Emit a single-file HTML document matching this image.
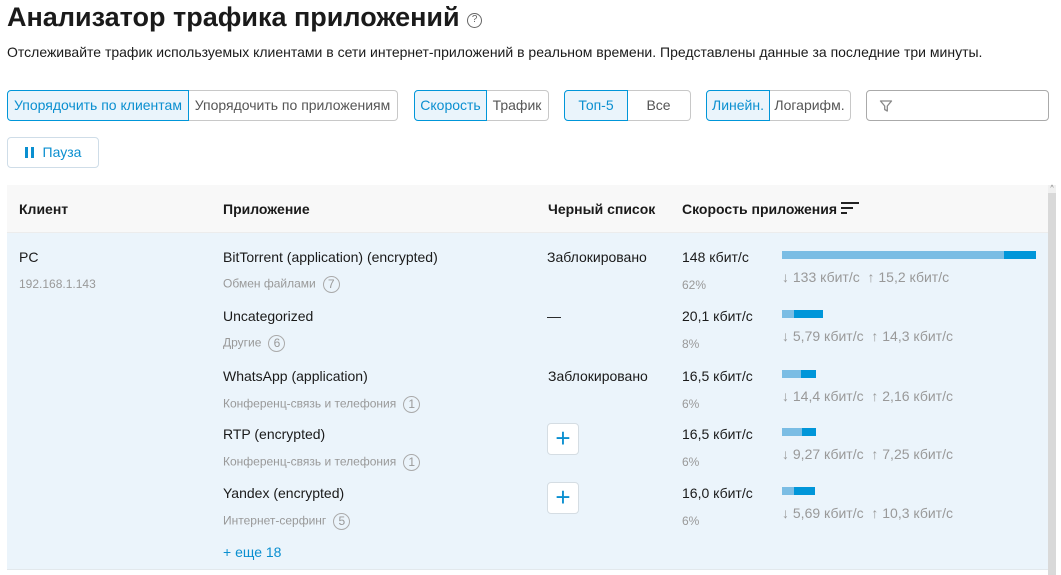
<!DOCTYPE html>
<html><head><meta charset="utf-8"><style>
*{margin:0;padding:0;box-sizing:border-box}
body{width:1061px;height:575px;overflow:hidden;background:#fff;font-family:"Liberation Sans",Arial,sans-serif;color:#1a1a1a;position:relative}
.a{position:absolute;white-space:nowrap}
.t{font-size:14px;line-height:16px}
.s{font-size:12px;line-height:14px;color:#999}
.b{font-weight:bold}
.btn{position:absolute;height:31px;border:1px solid #c8c8c8;font-size:14px;line-height:29px;text-align:center;color:#555;background:#fff}
.on{border-color:#0096d9;background:#eaf4fb;color:#0a8fd0;z-index:2}
.l{border-radius:4px 0 0 4px}.r{border-radius:0 4px 4px 0;border-left:none}
.n{display:inline-block;width:17px;height:17px;border:1.3px solid #aaa;border-radius:50%;text-align:center;line-height:14px;font-size:12px;margin-left:7px;vertical-align:middle;color:#999}
.bar{position:absolute;height:8px}
.lt{background:#7bbde4}.dk{background:#0096d9}
.plus{position:absolute;left:547px;width:32px;height:32px;border:1px solid #d5dde3;border-radius:4px;background:#fff;color:#0a8fd0;font-size:26px;line-height:28px;text-align:center}
</style></head><body>
<div class="a b" style="left:7px;top:1px;font-size:27px;line-height:32px">Анализатор трафика приложений <span style="display:inline-block;width:15px;height:15px;border:1.5px solid #666;border-radius:50%;font-size:10px;line-height:12px;text-align:center;vertical-align:4px;font-weight:normal;color:#666">?</span></div>
<div class="a t" style="left:7px;top:44px">Отслеживайте трафик используемых клиентами в сети интернет-приложений в реальном времени. Представлены данные за последние три минуты.</div>

<div class="btn on l" style="left:7px;top:90px;width:182px">Упорядочить по клиентам</div>
<div class="btn r" style="left:188px;top:90px;width:210px">Упорядочить по приложениям</div>
<div class="btn on l" style="left:414px;top:90px;width:73px">Скорость</div>
<div class="btn r" style="left:486px;top:90px;width:63px">Трафик</div>
<div class="btn on l" style="left:564px;top:90px;width:64px">Топ-5</div>
<div class="btn r" style="left:627px;top:90px;width:64px">Все</div>
<div class="btn on l" style="left:706px;top:90px;width:64px">Линейн.</div>
<div class="btn r" style="left:769px;top:90px;width:82px">Логарифм.</div>
<div class="btn" style="left:866px;top:90px;width:183px;border-radius:4px;border-color:#aaa">
<svg style="position:absolute;left:12px;top:8px" width="14" height="14" viewBox="0 0 14 14"><path d="M1.5 2h11L8.3 7v5L5.7 10.5V7z" fill="none" stroke="#888" stroke-width="1.3" stroke-linejoin="round"/></svg></div>
<div class="btn" style="left:7px;top:137px;width:92px;border-radius:4px;border-color:#cfdde8;color:#0a8fd0"><span style="display:inline-block;width:3px;height:11px;background:#0a8fd0;margin-right:3px;vertical-align:-1px"></span><span style="display:inline-block;width:3px;height:11px;background:#0a8fd0;margin-right:9px;vertical-align:-1px"></span>Пауза</div>

<div class="a" style="left:7px;top:185px;width:1041px;height:48px;background:#f8f8f8;border-bottom:1px solid #ececec"></div>
<div class="a" style="left:7px;top:233px;width:1041px;height:337px;background:#ebf4fb;border-bottom:1px solid #e2e8ec"></div>
<div class="a" style="left:1048px;top:185px;width:8px;height:390px;background:#d9d9d9"></div>
<div class="a" style="left:1048px;top:185px;width:8px;height:8px;background:#f0f0f0;font-size:7px;line-height:8px;text-align:center;color:#777">^</div>

<div class="a t b" style="left:19px;top:201px">Клиент</div>
<div class="a t b" style="left:223px;top:201px">Приложение</div>
<div class="a t b" style="left:548px;top:201px">Черный список</div>
<div class="a t b" style="left:682px;top:201px">Скорость приложения</div>
<svg class="a" style="left:841px;top:201px" width="18" height="14"><path d="M0 2h18M0 7h12M0 12h6" stroke="#222" stroke-width="2"/></svg>

<div class="a t" style="left:19px;top:249px">PC</div>
<div class="a s" style="left:19px;top:277px">192.168.1.143</div>

<div class="a t" style="left:223px;top:249px">BitTorrent (application) (encrypted)</div>
<div class="a s" style="left:223px;top:276px">Обмен файлами<span class="n">7</span></div>
<div class="a t" style="left:547px;top:249px">Заблокировано</div>
<div class="a t" style="left:682px;top:249px">148 кбит/с</div>
<div class="a s" style="left:682px;top:278px">62%</div>
<div class="bar lt" style="left:782px;top:251px;width:222px"></div><div class="bar dk" style="left:1004px;top:251px;width:32px"></div>
<div class="a t" style="left:782px;top:269px;color:#999">↓ 133 кбит/с &nbsp;↑ 15,2 кбит/с</div>

<div class="a t" style="left:223px;top:308px">Uncategorized</div>
<div class="a s" style="left:223px;top:335px">Другие<span class="n">6</span></div>
<div class="a t" style="left:547px;top:308px">—</div>
<div class="a t" style="left:682px;top:308px">20,1 кбит/с</div>
<div class="a s" style="left:682px;top:337px">8%</div>
<div class="bar lt" style="left:782px;top:310px;width:12px"></div><div class="bar dk" style="left:794px;top:310px;width:29px"></div>
<div class="a t" style="left:782px;top:328px;color:#999">↓ 5,79 кбит/с &nbsp;↑ 14,3 кбит/с</div>

<div class="a t" style="left:223px;top:368px">WhatsApp (application)</div>
<div class="a s" style="left:223px;top:396px">Конференц-связь и телефония<span class="n">1</span></div>
<div class="a t" style="left:548px;top:368px">Заблокировано</div>
<div class="a t" style="left:682px;top:368px">16,5 кбит/с</div>
<div class="a s" style="left:682px;top:397px">6%</div>
<div class="bar lt" style="left:782px;top:370px;width:19px"></div><div class="bar dk" style="left:801px;top:370px;width:15px"></div>
<div class="a t" style="left:782px;top:388px;color:#999">↓ 14,4 кбит/с &nbsp;↑ 2,16 кбит/с</div>

<div class="a t" style="left:223px;top:426px">RTP (encrypted)</div>
<div class="a s" style="left:223px;top:454px">Конференц-связь и телефония<span class="n">1</span></div>
<div class="plus" style="top:423px">+</div>
<div class="a t" style="left:682px;top:426px">16,5 кбит/с</div>
<div class="a s" style="left:682px;top:455px">6%</div>
<div class="bar lt" style="left:782px;top:428px;width:20px"></div><div class="bar dk" style="left:802px;top:428px;width:14px"></div>
<div class="a t" style="left:782px;top:446px;color:#999">↓ 9,27 кбит/с &nbsp;↑ 7,25 кбит/с</div>

<div class="a t" style="left:223px;top:485px">Yandex (encrypted)</div>
<div class="a s" style="left:223px;top:513px">Интернет-серфинг<span class="n">5</span></div>
<div class="plus" style="top:482px">+</div>
<div class="a t" style="left:682px;top:485px">16,0 кбит/с</div>
<div class="a s" style="left:682px;top:514px">6%</div>
<div class="bar lt" style="left:782px;top:487px;width:12px"></div><div class="bar dk" style="left:794px;top:487px;width:21px"></div>
<div class="a t" style="left:782px;top:505px;color:#999">↓ 5,69 кбит/с &nbsp;↑ 10,3 кбит/с</div>

<div class="a t" style="left:223px;top:544px;color:#0a8fd0">+ еще 18</div>
</body></html>
